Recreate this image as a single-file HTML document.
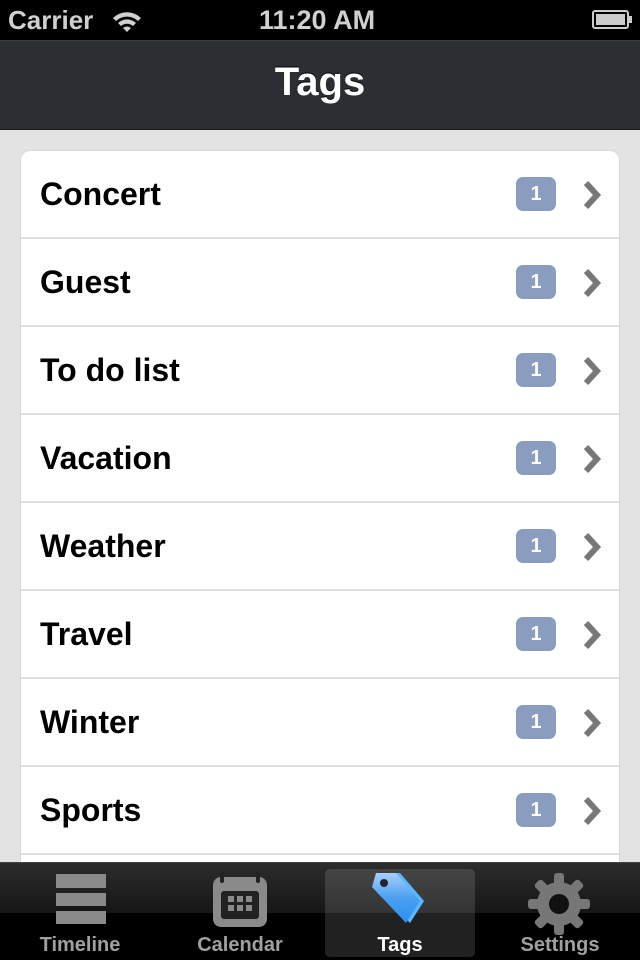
<!DOCTYPE html>
<html><head><meta charset="utf-8"><style>
*{margin:0;padding:0;box-sizing:border-box}
body{width:640px;height:960px;overflow:hidden;background:#e3e3e3;font-family:"Liberation Sans",Arial,sans-serif;position:relative}
.sb{position:absolute;top:0;left:0;width:640px;height:40px;background:#000;color:#d0d0d0;font-size:26px;font-weight:bold}
.nav{position:absolute;top:40px;left:0;width:640px;height:90px;background:#2b2f33;border-top:1px solid #3a3e42;border-bottom:1px solid #1a1c1e;color:#fff;font-size:40px;font-weight:bold;text-align:center;line-height:82px;text-shadow:0 -1px 0 #000}
.card{position:absolute;top:150px;left:20px;width:600px;height:760px;background:#fff;border-radius:10px;border:1px solid #d8d8d8;overflow:hidden}
.row{height:88px;border-bottom:2px solid #e0e0e0;position:relative}
.row span{position:absolute;left:19px;top:25px;font-size:32px;font-weight:bold;color:#000}
.badge{position:absolute;left:495px;top:26px;width:40px;height:34px;border-radius:7px;background:#8a9cc0;color:#fff;font-size:20px;font-weight:bold;text-align:center;line-height:34px}
.chev{position:absolute;left:560px;top:29px}
.tab{position:absolute;top:862px;left:0;width:640px;height:98px;background:linear-gradient(#2c2c2c,#161616 50px,#000 50px,#000);border-top:1px solid #444}
.t{position:absolute;top:71px;width:160px;text-align:center;font-size:20px;font-weight:bold;color:#a0a0a0}
.sel{position:absolute;left:325px;top:6px;width:150px;height:88px;background:rgba(255,255,255,0.13);border-radius:5px}
</style></head><body>
<div class="sb">
<span style="position:absolute;left:8px;top:5px">Carrier</span>
<svg style="position:absolute;left:110px;top:10px" width="34" height="22" viewBox="0 0 34 22"><path d="M3 8 A20 20 0 0 1 31 8 L28 11 A16 16 0 0 0 6 11Z M8 13 A13 13 0 0 1 26 13 L23 16 A9 9 0 0 0 11 16Z M13 18 A6 6 0 0 1 21 18 L17 22Z" fill="#d0d0d0"/></svg>
<span style="position:absolute;left:259px;top:5px;font-size:27px">11:20 AM</span>
<svg style="position:absolute;left:592px;top:10px" width="42" height="20"><rect x="1" y="1" width="35" height="17" rx="2" fill="none" stroke="#ccc" stroke-width="2"/><rect x="4" y="4" width="29" height="11" fill="#ccc"/><rect x="37" y="6" width="3" height="7" fill="#ccc"/></svg>
</div>
<div class="nav">Tags</div>
<div class="card">
<div class="row"><span>Concert</span><div class="badge">1</div><svg class="chev" width="22" height="30"><path d="M5 3 L16 15 L5 27" fill="none" stroke="#777" stroke-width="6"/></svg></div>
<div class="row"><span>Guest</span><div class="badge">1</div><svg class="chev" width="22" height="30"><path d="M5 3 L16 15 L5 27" fill="none" stroke="#777" stroke-width="6"/></svg></div>
<div class="row"><span>To do list</span><div class="badge">1</div><svg class="chev" width="22" height="30"><path d="M5 3 L16 15 L5 27" fill="none" stroke="#777" stroke-width="6"/></svg></div>
<div class="row"><span>Vacation</span><div class="badge">1</div><svg class="chev" width="22" height="30"><path d="M5 3 L16 15 L5 27" fill="none" stroke="#777" stroke-width="6"/></svg></div>
<div class="row"><span>Weather</span><div class="badge">1</div><svg class="chev" width="22" height="30"><path d="M5 3 L16 15 L5 27" fill="none" stroke="#777" stroke-width="6"/></svg></div>
<div class="row"><span>Travel</span><div class="badge">1</div><svg class="chev" width="22" height="30"><path d="M5 3 L16 15 L5 27" fill="none" stroke="#777" stroke-width="6"/></svg></div>
<div class="row"><span>Winter</span><div class="badge">1</div><svg class="chev" width="22" height="30"><path d="M5 3 L16 15 L5 27" fill="none" stroke="#777" stroke-width="6"/></svg></div>
<div class="row"><span>Sports</span><div class="badge">1</div><svg class="chev" width="22" height="30"><path d="M5 3 L16 15 L5 27" fill="none" stroke="#777" stroke-width="6"/></svg></div>
<div class="row"></div>
</div>
<div class="tab">
<div class="sel"></div>
<svg style="position:absolute;left:55px;top:10px" width="52" height="52"><rect x="1" y="1" width="50" height="14" fill="#8a8a8a"/><rect x="1" y="20" width="50" height="13" fill="#8a8a8a"/><rect x="1" y="38" width="50" height="13" fill="#8a8a8a"/></svg>
<svg style="position:absolute;left:211px;top:8px" width="58" height="58"><rect x="2" y="6" width="54" height="50" rx="8" fill="#8a8a8a"/><rect x="10" y="20" width="38" height="28" rx="3" fill="#222"/><rect x="17" y="25" width="6" height="6" fill="#8a8a8a"/><rect x="26" y="25" width="6" height="6" fill="#8a8a8a"/><rect x="35" y="25" width="6" height="6" fill="#8a8a8a"/><rect x="17" y="34" width="6" height="6" fill="#8a8a8a"/><rect x="26" y="34" width="6" height="6" fill="#8a8a8a"/><rect x="35" y="34" width="6" height="6" fill="#8a8a8a"/><rect x="9" y="0" width="4" height="12" rx="2" fill="#222"/><rect x="45" y="0" width="4" height="12" rx="2" fill="#222"/></svg>
<svg style="position:absolute;left:372px;top:8px" width="56" height="54"><defs><linearGradient id="g" x1="0" y1="0" x2="0" y2="1"><stop offset="0" stop-color="#a8d0ff"/><stop offset="0.5" stop-color="#4aa0f0"/><stop offset="1" stop-color="#2a90f0"/></linearGradient></defs><path d="M8 2 L28 2 L52 30 L38 52 L3 16Z" fill="#5ab8ff"/><path d="M4 2 L24 2 L48 30 L34 52 L0 16Z" fill="url(#g)"/><circle cx="12" cy="12" r="4" fill="#223"/></svg>
<svg style="position:absolute;left:528px;top:10px" width="62" height="62" viewBox="-31 -31 62 62"><g fill="#777"><circle r="22"/><rect x="-5" y="-31" width="10" height="62" rx="3"/><rect x="-31" y="-5" width="62" height="10" rx="3"/><rect x="-5" y="-31" width="10" height="62" rx="3" transform="rotate(45)"/><rect x="-5" y="-31" width="10" height="62" rx="3" transform="rotate(-45)"/></g><circle r="10" fill="#111"/></svg>
<div class="t" style="left:0">Timeline</div>
<div class="t" style="left:160px">Calendar</div>
<div class="t" style="left:320px;color:#fff">Tags</div>
<div class="t" style="left:480px">Settings</div>
</div>
</body></html>
